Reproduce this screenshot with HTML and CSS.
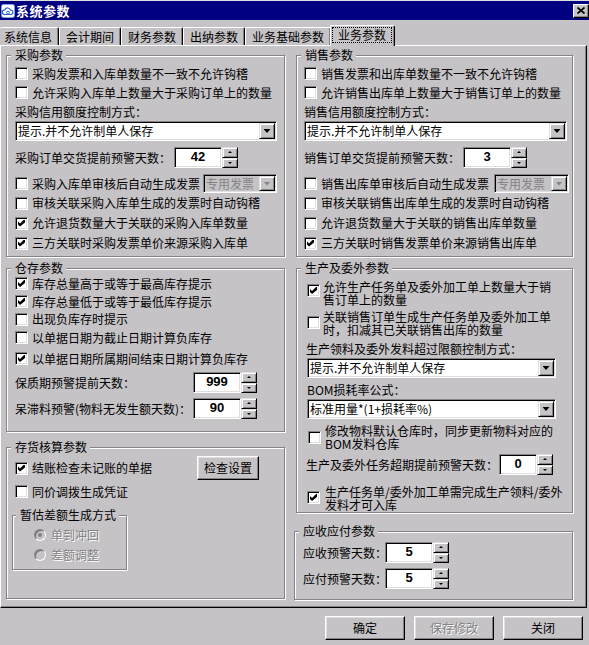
FILE: index.html
```html
<!DOCTYPE html>
<html>
<head>
<meta charset="utf-8">
<title>系统参数</title>
<link rel="stylesheet" href="styles.css">
</head>
<body>
<div class="window">
  <div class="titlebar">
    <svg class="title-icon" width="14" height="14" viewBox="0 0 14 14">
      <rect x="0.5" y="0.5" width="13" height="13" rx="2" fill="#fff" stroke="#7d9ee0"/>
      <path d="M3.5 10.5 a2.3 2.3 0 0 1 0.3-4.6 a3 3 0 0 1 5.7 0.3 a2.2 2.2 0 0 1 0.8 4.3 z" fill="none" stroke="#2a66cc" stroke-width="1.2"/>
      <circle cx="7" cy="8.6" r="1.4" fill="none" stroke="#2a66cc" stroke-width="1"/>
    </svg>
    <span class="title">系统参数</span>
    <div class="close">
      <svg width="8" height="7" viewBox="0 0 8 7"><path d="M0.5 0.5L7.5 6.5M7.5 0.5L0.5 6.5" stroke="#000" stroke-width="1.7"/></svg>
    </div>
  </div>

  <div class="tabs">
    <div class="tab first">系统信息</div>
    <div class="tab">会计期间</div>
    <div class="tab">财务参数</div>
    <div class="tab">出纳参数</div>
    <div class="tab">业务基础参数</div>
    <div class="tab active"><span class="focus">业务参数</span></div>
  </div>

  <div class="panel">
    <div class="col col-left">
      <div class="group g-purchase">
        <span class="legend">采购参数</span>
        <div class="row"><span class="cb"></span>采购发票和入库单数量不一致不允许钩稽</div>
        <div class="row"><span class="cb"></span>允许采购入库单上数量大于采购订单上的数量</div>
        <div class="row">采购信用额度控制方式：</div>
        <div class="select"><span class="select-text">提示.并不允许制单人保存</span><span class="dd"></span></div>
        <div class="row spin-row mt6">
          <span class="spin-label w159">采购订单交货提前预警天数：</span>
          <span class="spin"><span class="spin-input">42</span><span class="spin-btns"><span class="spin-btn up"></span><span class="spin-btn down"></span></span></span>
        </div>
        <div class="row mt6"><span class="cb"></span>采购入库单审核后自动生成发票<span class="select combo disabled"><span class="select-text">专用发票</span><span class="dd"></span></span></div>
        <div class="row h20"><span class="cb"></span>审核关联采购入库单生成的发票时自动钩稽</div>
        <div class="row h20"><span class="cb on"></span>允许退货数量大于关联的采购入库单数量</div>
        <div class="row h20"><span class="cb on"></span>三方关联时采购发票单价来源采购入库单</div>
      </div>

      <div class="group g-stock">
        <span class="legend">仓存参数</span>
        <div class="row"><span class="cb on"></span>库存总量高于或等于最高库存提示</div>
        <div class="row h17"><span class="cb on"></span>库存总量低于或等于最低库存提示</div>
        <div class="row h18"><span class="cb"></span>出现负库存时提示</div>
        <div class="row"><span class="cb"></span>以单据日期为截止日期计算负库存</div>
        <div class="row mt2"><span class="cb on"></span>以单据日期所属期间结束日期计算负库存</div>
        <div class="row spin-row mt4">
          <span class="spin-label w178">保质期预警提前天数：</span>
          <span class="spin"><span class="spin-input">999</span><span class="spin-btns"><span class="spin-btn up"></span><span class="spin-btn down"></span></span></span>
        </div>
        <div class="row spin-row mt5">
          <span class="spin-label w178">呆滞料预警(物料无发生额天数)：</span>
          <span class="spin"><span class="spin-input">90</span><span class="spin-btns"><span class="spin-btn up"></span><span class="spin-btn down"></span></span></span>
        </div>
      </div>

      <div class="group g-cost">
        <span class="legend">存货核算参数</span>
        <div class="row h24"><span class="cb on"></span>结账检查未记账的单据<span class="btn btn-check">检查设置</span></div>
        <div class="row mt2"><span class="cb"></span>同价调拨生成凭证</div>
        <div class="group g-est">
          <span class="legend legend-est">暂估差额生成方式</span>
          <div class="row h20 disabled-text"><span class="radio on"></span>单到冲回</div>
          <div class="row h20 disabled-text"><span class="radio"></span>差额调整</div>
        </div>
      </div>
    </div>

    <div class="col col-right">
      <div class="group g-sales">
        <span class="legend">销售参数</span>
        <div class="row"><span class="cb"></span>销售发票和出库单数量不一致不允许钩稽</div>
        <div class="row"><span class="cb"></span>允许销售出库单上数量大于销售订单上的数量</div>
        <div class="row">销售信用额度控制方式：</div>
        <div class="select"><span class="select-text">提示.并不允许制单人保存</span><span class="dd"></span></div>
        <div class="row spin-row mt6">
          <span class="spin-label w159">销售订单交货提前预警天数：</span>
          <span class="spin"><span class="spin-input">3</span><span class="spin-btns"><span class="spin-btn up"></span><span class="spin-btn down"></span></span></span>
        </div>
        <div class="row mt6"><span class="cb"></span>销售出库单审核后自动生成发票<span class="select combo combo-wide disabled"><span class="select-text">专用发票</span><span class="dd"></span></span></div>
        <div class="row h20"><span class="cb"></span>审核关联销售出库单生成的发票时自动钩稽</div>
        <div class="row h20"><span class="cb"></span>允许退货数量大于关联的销售出库单数量</div>
        <div class="row h20"><span class="cb on"></span>三方关联时销售发票单价来源销售出库单</div>
      </div>

      <div class="group g-prod">
        <span class="legend">生产及委外参数</span>
        <div class="row2"><span class="cb on cbt4"></span><span class="txt2"><span class="ln">允许生产任务单及委外加工单上数量大于销</span><span class="ln">售订单上的数量</span></span></div>
        <div class="row2 mt4"><span class="cb cbt6"></span><span class="txt2"><span class="ln">关联销售订单生成生产任务单及委外加工单</span><span class="ln">时，扣减其已关联销售出库的数量</span></span></div>
        <div class="row mt3 outdent">生产领料及委外发料超过限额控制方式：</div>
        <div class="select"><span class="select-text">提示.并不允许制单人保存</span><span class="dd"></span></div>
        <div class="row mt2">BOM损耗率公式：</div>
        <div class="select"><span class="select-text">标准用量*(1+损耗率%)</span><span class="dd"></span></div>
        <div class="row2 mt5 shift1"><span class="cb cbt7"></span><span class="txt2 txt-gap"><span class="ln">修改物料默认仓库时，同步更新物料对应的</span><span class="ln">BOM发料仓库</span></span></div>
        <div class="row spin-row mt4">
          <span class="spin-label w192 outdent">生产及委外任务超期提前预警天数：</span>
          <span class="spin"><span class="spin-input narrow">0</span><span class="spin-btns"><span class="spin-btn up"></span><span class="spin-btn down"></span></span></span>
        </div>
        <div class="row2 mt10"><span class="cb on cbt6"></span><span class="txt2 txt-gap2"><span class="ln">生产任务单/委外加工单需完成生产领料/委外</span><span class="ln">发料才可入库</span></span></div>
      </div>

      <div class="group g-ar">
        <span class="legend">应收应付参数</span>
        <div class="row spin-row">
          <span class="spin-label w82">应收预警天数：</span>
          <span class="spin"><span class="spin-input">5</span><span class="spin-btns"><span class="spin-btn up"></span><span class="spin-btn down"></span></span></span>
        </div>
        <div class="row spin-row mt5">
          <span class="spin-label w82">应付预警天数：</span>
          <span class="spin"><span class="spin-input">5</span><span class="spin-btns"><span class="spin-btn up"></span><span class="spin-btn down"></span></span></span>
        </div>
      </div>
    </div>
  </div>

  <div class="buttons">
    <span class="btn btn-main">确定</span>
    <span class="btn btn-main disabled">保存修改</span>
    <span class="btn btn-main">关闭</span>
  </div>
</div>
</body>
</html>
```

FILE: styles.css
```css
* { box-sizing: border-box; }

html, body {
  margin: 0;
  padding: 0;
}

body {
  width: 589px;
  height: 645px;
  overflow: hidden;
  background: #c6c3c6;
  color: #000;
  font-family: "Noto Sans CJK SC", "Noto Sans CJK JP", sans-serif;
  font-size: 12px;
  line-height: 14px;
}

.window {
  width: 589px;
  height: 645px;
  border-top: 1px solid #dfdfdf;
  display: flex;
  flex-direction: column;
}

/* title bar */
.titlebar {
  height: 19px;
  flex: none;
  background: #000080;
  color: #fff;
  display: flex;
  align-items: center;
  padding-left: 1px;
}

.title-icon {
  flex: none;
  margin-right: 1px;
}

.title {
  font-weight: bold;
  font-size: 13px;
  line-height: 19px;
  letter-spacing: 0.5px;
}

.close {
  margin-left: auto;
  width: 16px;
  height: 14px;
  background: #c6c3c6;
  border: 1px solid;
  border-color: #fff #000 #000 #fff;
  box-shadow: inset -1px -1px 0 #848284;
  display: flex;
  align-items: center;
  justify-content: center;
}

/* tabs */
.tabs {
  height: 20px;
  margin-top: 5px;
  display: flex;
  align-items: flex-end;
  flex: none;
}

.tab {
  height: 18px;
  padding: 0 6px;
  border-left: 1px solid #fff;
  border-top: 1px solid #fff;
  border-right: 1px solid #000;
  border-top-left-radius: 2px;
  border-top-right-radius: 2px;
  box-shadow: inset -1px 0 0 #848284;
  line-height: 17px;
  white-space: nowrap;
}

.tab.first {
  border-left: 0;
  padding-left: 4px;
}

.tab.active {
  position: relative;
  z-index: 1;
  height: 21px;
  margin-bottom: -1px;
  margin-left: -1px;
  padding: 1px 2px 0 1px;
  background: #c6c3c6;
  display: flex;
  align-items: flex-start;
}

.focus {
  height: 16px;
  line-height: 14px;
  padding: 0 5px;
  border: 1px dotted #000;
}

/* tab page */
.panel {
  width: 587px;
  height: 563px;
  flex: none;
  border: 1px solid;
  border-color: #fff #000 #000 #fff;
  box-shadow: inset -1px -1px 0 #848284;
  display: flex;
  padding: 9px 0 0 5px;
}

.col {
  width: 280px;
  display: flex;
  flex-direction: column;
}

.col-right {
  margin-left: 8px;
}

/* group boxes */
.group {
  position: relative;
  width: 279px;
  border: 1px solid #848284;
  box-shadow: 1px 1px 0 #fff, inset 1px 1px 0 #fff;
  padding: 8px 7px 0 8px;
  flex: none;
}

.legend {
  position: absolute;
  top: -8px;
  left: 4px;
  padding: 0 3px 0 4px;
  background: #c6c3c6;
  line-height: 14px;
  white-space: nowrap;
}

.legend-est {
  left: 3px;
  padding-left: 4px;
}

.g-purchase { height: 202px; }
.g-stock { height: 164px; margin-top: 11px; padding-top: 5px; }
.g-cost { height: 152px; margin-top: 15px; }

.g-sales {
  height: 202px;
  width: 277px;
  margin-left: 2px;
  padding-left: 7px;
  padding-right: 5px;
}

.g-prod {
  height: 245px;
  width: 277px;
  margin-left: 2px;
  margin-top: 11px;
  padding: 11px 16px 0 10px;
}

.g-ar {
  height: 69px;
  margin-top: 18px;
  padding-top: 10px;
}

.g-est {
  width: 115px;
  height: 55px;
  margin-top: 14px;
  margin-left: -3px;
  padding: 9px 0 0 21px;
}

/* rows */
.row {
  height: 19px;
  display: flex;
  align-items: center;
  white-space: nowrap;
}

.h17 { height: 17px; }
.h18 { height: 18px; }
.h20 { height: 20px; }
.h24 { height: 24px; }
.mt2 { margin-top: 2px; }
.mt3 { margin-top: 3px; }
.mt4 { margin-top: 4px; }
.mt5 { margin-top: 5px; }
.mt6 { margin-top: 6px; }
.mt10 { margin-top: 10px; }
.outdent { margin-left: -1px; }

.row2 {
  display: flex;
  align-items: flex-start;
  height: 26px;
}

.txt2 {
  display: flex;
  flex-direction: column;
  white-space: nowrap;
}

.ln {
  display: block;
  height: 13px;
  line-height: 13px;
}

.row2 .cb { margin-right: 3px; }
.cbt4 { margin-top: 4px; }
.cbt6 { margin-top: 6px; }
.cbt7 { margin-top: 7px; }
.shift1 { padding-left: 1px; }
.row2 .txt-gap { margin-left: 1px; }
.row2 .txt-gap2 { margin-left: 2px; }

/* checkbox */
.cb {
  width: 13px;
  height: 13px;
  flex: none;
  margin-right: 4px;
  background: #fff;
  border: 1px solid;
  border-color: #848284 #fff #fff #848284;
  box-shadow: inset 1px 1px 0 #000, inset -1px -1px 0 #dfdfdf;
  display: flex;
  align-items: center;
  justify-content: center;
}

.cb.on::after {
  content: "";
  width: 7px;
  height: 7px;
  background: #000;
  clip-path: polygon(0 29%, 29% 57%, 86% 0, 100% 0, 100% 43%, 29% 100%, 0 71%);
}

/* radio */
.radio {
  width: 12px;
  height: 12px;
  flex: none;
  margin-right: 5px;
  border-radius: 50%;
  background: #c6c3c6;
  border: 1px solid;
  border-color: #848284 #fff #fff #848284;
  box-shadow: inset 1px 1px 0 #6e6c6e;
  display: flex;
  align-items: center;
  justify-content: center;
}

.radio.on::after {
  content: "";
  width: 4px;
  height: 4px;
  border-radius: 50%;
  background: #848284;
}

.disabled-text {
  color: #848284;
  text-shadow: 1px 1px 0 #fff;
}

/* combo box */
.select {
  height: 20px;
  display: flex;
  background: #fff;
  border: 1px solid;
  border-color: #848284 #fff #fff #848284;
  box-shadow: inset 1px 1px 0 #000, inset -1px -1px 0 #dfdfdf;
  padding: 1px;
  flex: none;
}

.select-text {
  flex: 1;
  padding-left: 1px;
  line-height: 16px;
  white-space: nowrap;
  overflow: hidden;
}

.dd {
  width: 16px;
  height: 16px;
  flex: none;
  background: #c6c3c6;
  border: 1px solid;
  border-color: #dfdfdf #000 #000 #dfdfdf;
  box-shadow: inset 1px 1px 0 #fff, inset -1px -1px 0 #848284;
  display: flex;
  align-items: center;
  justify-content: center;
}

.dd::after {
  content: "";
  width: 7px;
  height: 4px;
  background: #000;
  clip-path: polygon(0 0, 100% 0, 50% 100%);
}

.combo {
  width: 74px;
  height: 19px;
  margin-left: auto;
}

.combo .dd {
  height: 15px;
}

.combo-wide {
  width: 75px;
  margin-right: -2px;
}

.select.disabled {
  background: #c6c3c6;
  color: #848284;
}

.select.disabled .dd::after {
  background: #848284;
}

/* spin edit */
.spin-row {
  height: 21px;
}

.spin-label { flex: none; white-space: nowrap; }
.w82 { width: 82px; }
.w159 { width: 159px; }
.w178 { width: 178px; }
.w192 { width: 193px; }

.spin {
  display: flex;
  height: 21px;
}

.spin-input {
  width: 48px;
  height: 21px;
  background: #fff;
  border: 1px solid;
  border-color: #848284 #fff #fff #848284;
  box-shadow: inset 1px 1px 0 #000, inset -1px -1px 0 #dfdfdf;
  text-align: center;
  font-family: "Liberation Sans", Arial, sans-serif;
  font-weight: bold;
  font-size: 13px;
  line-height: 18px;
}

.spin-input.narrow { width: 38px; }

.spin-btns {
  width: 16px;
  display: flex;
  flex-direction: column;
}

.spin-btn {
  flex: 1;
  background: #c6c3c6;
  border: 1px solid;
  border-color: #dfdfdf #000 #000 #dfdfdf;
  box-shadow: inset 1px 1px 0 #fff, inset -1px -1px 0 #848284;
  display: flex;
  align-items: center;
  justify-content: center;
}

.spin-btn::after {
  content: "";
  width: 0;
  height: 0;
  border-left: 2px solid transparent;
  border-right: 2px solid transparent;
}

.spin-btn.up::after { border-bottom: 2px solid #000; }
.spin-btn.down::after { border-top: 2px solid #000; }

/* push buttons */
.btn {
  height: 24px;
  background: #c6c3c6;
  border: 1px solid;
  border-color: #fff #000 #000 #fff;
  box-shadow: inset -1px -1px 0 #848284, inset 1px 1px 0 #dfdfdf;
  display: flex;
  align-items: center;
  justify-content: center;
  white-space: nowrap;
  flex: none;
}

.btn-check {
  width: 62px;
  margin-left: auto;
  margin-right: 18px;
}

.btn.disabled {
  color: #848284;
  text-shadow: 1px 1px 0 #fff;
}

.buttons {
  display: flex;
  justify-content: flex-end;
  gap: 9px;
  margin-top: 8px;
  padding-right: 6px;
}

.btn-main {
  width: 80px;
}
```
